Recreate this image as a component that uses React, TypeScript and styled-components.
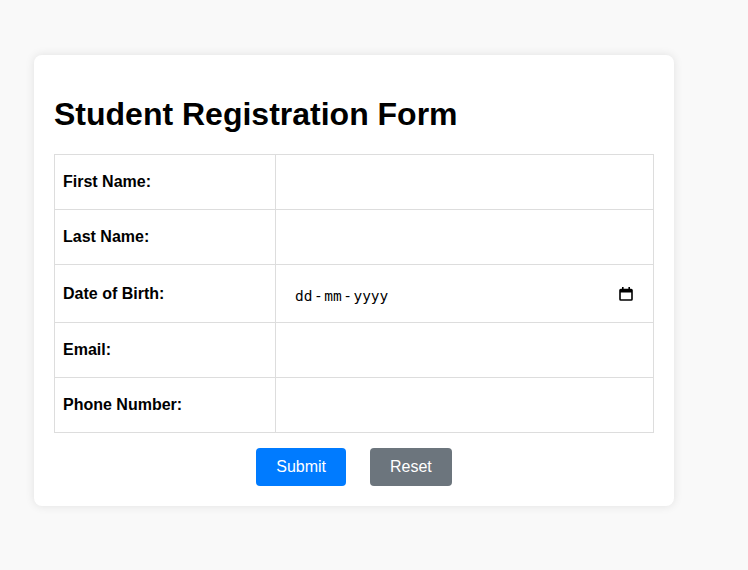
import React from "react";
import styled, { createGlobalStyle } from "styled-components";

const GlobalStyle = createGlobalStyle`
  html, body {
    margin: 0;
    padding: 0;
    background: #f9f9f9;
    font-family: "Liberation Sans", Arial, sans-serif;
  }
  * { box-sizing: border-box; }
`;

const Page = styled.div`
  padding: 55px 0 40px 34px;
`;

const Card = styled.div`
  width: 640px;
  background: #ffffff;
  padding: 20px;
  border-radius: 8px;
  box-shadow: 0 0 10px rgba(0, 0, 0, 0.1);
`;

const Title = styled.h1`
  font-family: "Liberation Sans", Arial, sans-serif;
  font-size: 32px;
  font-weight: bold;
  color: #000;
  margin: 21px 0 21px;
  line-height: 37px;
`;

const FormTable = styled.table`
  width: 100%;
  border-collapse: collapse;
  table-layout: fixed;
`;

const LabelCell = styled.td`
  width: 221px;
  border: 1px solid #dddddd;
  padding: 8px;
  font-size: 16px;
  font-weight: bold;
  color: #000;
  vertical-align: middle;
`;

const InputCell = styled.td`
  border: 1px solid #dddddd;
  padding: 8px;
  vertical-align: middle;
`;

const TextInput = styled.input`
  display: block;
  width: 100%;
  height: 38px;
  padding: 10px;
  border: 1px solid transparent;
  background: transparent;
  font-family: "DejaVu Sans Mono", monospace;
  font-size: 13.33px;
  outline: none;
`;

const DateBox = styled.div`
  display: flex;
  align-items: center;
  width: 100%;
  height: 41px;
  padding: 0 10px;
  border: 1px solid transparent;
  font-family: "DejaVu Sans Mono", monospace;
  font-size: 14.5px;
  color: #000;
`;

const DateText = styled.span`
  display: inline-flex;
  margin-top: 5px;
`;

const Separator = styled.span`
  margin: 0 1.5px;
`;

const CalendarIcon = styled.svg`
  margin-left: auto;
  margin-right: 1px;
  flex: none;
`;

const ButtonRow = styled.div`
  display: flex;
  justify-content: center;
  gap: 24px;
  padding-top: 15px;
`;

const Button = styled.button<{ $variant: "primary" | "secondary" }>`
  font-family: "Liberation Sans", Arial, sans-serif;
  font-size: 16px;
  line-height: 18px;
  padding: 10px 20px;
  border: none;
  border-radius: 4px;
  color: #fff;
  cursor: pointer;
  background: ${(p) => (p.$variant === "primary" ? "#007bff" : "#6c757d")};
`;

function DateField() {
  return (
    <DateBox role="group" aria-label="Date of Birth">
      <DateText>
        <span>dd</span>
        <Separator>-</Separator>
        <span>mm</span>
        <Separator>-</Separator>
        <span>yyyy</span>
      </DateText>
      <CalendarIcon width="14" height="15" viewBox="0 0 14 15" aria-hidden="true">
        <rect x="1" y="3.5" width="12" height="10.5" rx="0.8" fill="none" stroke="#000" strokeWidth="1.6" />
        <rect x="1" y="3.5" width="12" height="3" fill="#000" />
        <rect x="3" y="1" width="1.6" height="3" fill="#000" />
        <rect x="9.4" y="1" width="1.6" height="3" fill="#000" />
      </CalendarIcon>
    </DateBox>
  );
}

const fields: { label: string; type: string; name: string }[] = [
  { label: "First Name:", type: "text", name: "firstName" },
  { label: "Last Name:", type: "text", name: "lastName" },
  { label: "Date of Birth:", type: "date", name: "dob" },
  { label: "Email:", type: "email", name: "email" },
  { label: "Phone Number:", type: "tel", name: "phone" },
];

export default function App() {
  return (
    <Page>
      <GlobalStyle />
      <Card>
        <Title>Student Registration Form</Title>
        <form onSubmit={(e) => e.preventDefault()}>
          <FormTable>
            <tbody>
              {fields.map((f) => (
                <tr key={f.name}>
                  <LabelCell>
                    <label htmlFor={f.name}>{f.label}</label>
                  </LabelCell>
                  <InputCell>
                    {f.type === "date" ? (
                      <DateField />
                    ) : (
                      <TextInput id={f.name} name={f.name} type={f.type} />
                    )}
                  </InputCell>
                </tr>
              ))}
            </tbody>
          </FormTable>
          <ButtonRow>
            <Button type="submit" $variant="primary">Submit</Button>
            <Button type="reset" $variant="secondary">Reset</Button>
          </ButtonRow>
        </form>
      </Card>
    </Page>
  );
}
